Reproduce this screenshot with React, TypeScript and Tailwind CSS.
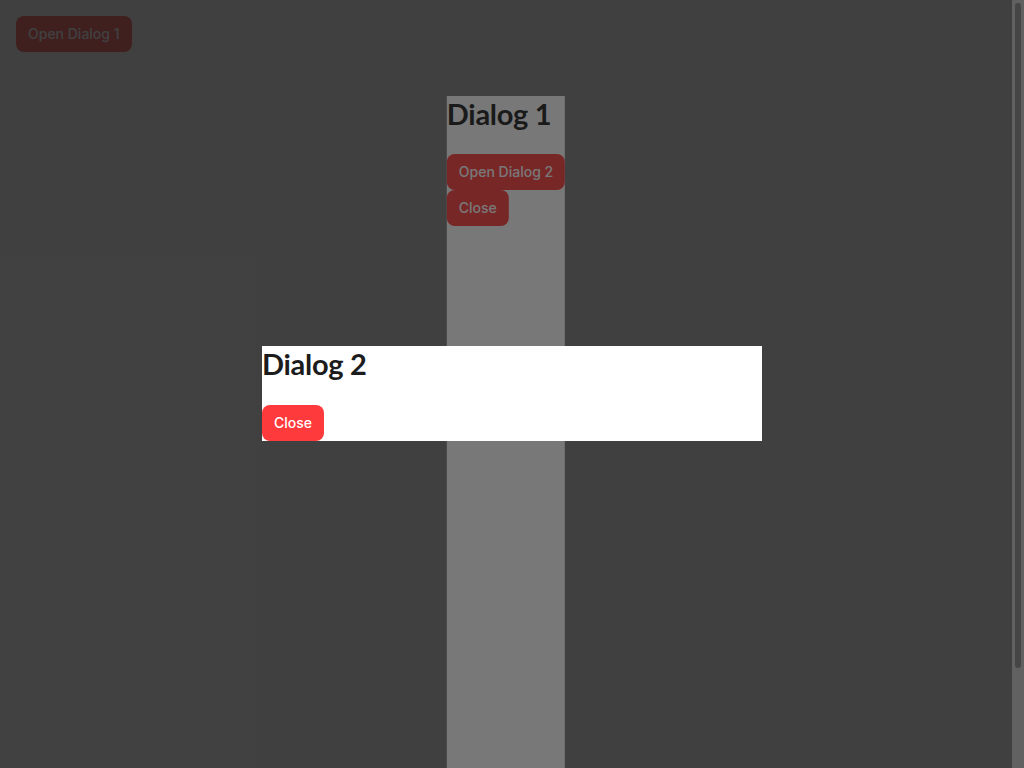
import React from "react";

const font = { fontFamily: "Inter, 'Noto Sans', sans-serif" };
const titleFont = { fontFamily: "Lato, Inter, sans-serif" };

function Btn({ children }: { children: React.ReactNode }) {
  return (
    <button className="h-9 shrink-0 rounded-lg bg-[#ff3a3c] px-3 text-sm font-medium text-white">
      {children}
    </button>
  );
}

export default function App() {
  return (
    <div className="flex h-screen overflow-hidden bg-white" style={font}>
      {/* page */}
      <div className="relative flex-1">
        <div className="p-4">
          <Btn>Open Dialog 1</Btn>
        </div>

        {/* overlay 1 */}
        <div className="absolute inset-0 bg-[rgba(26,26,26,0.59)]" />

        {/* dialog 1 */}
        <div className="absolute left-1/2 top-[96px] flex h-[790px] w-fit -translate-x-1/2 flex-col items-start bg-white">
          <h2
            className="mb-[22px] text-[29px] font-bold leading-9 tracking-[-0.01em] text-[#1c1c1c]"
            style={titleFont}
          >
            Dialog 1
          </h2>
          <Btn>Open Dialog 2</Btn>
          <Btn>Close</Btn>
        </div>

        {/* overlay 2 */}
        <div className="absolute inset-0 bg-[rgba(26,26,26,0.59)]" />

        {/* dialog 2 */}
        <div className="absolute left-[262px] top-[346px] flex h-[95px] w-[500px] flex-col items-start bg-white">
          <h2
            className="mb-[23px] text-[29px] font-bold leading-9 tracking-[-0.01em] text-[#1c1c1c]"
            style={titleFont}
          >
            Dialog 2
          </h2>
          <Btn>Close</Btn>
        </div>
      </div>

      {/* scrollbar */}
      <div className="flex w-3 shrink-0 flex-col bg-[#616161] px-[3px] pt-[3px]">
        <div className="h-[665px] rounded-full bg-[#454545]" />
      </div>
    </div>
  );
}
